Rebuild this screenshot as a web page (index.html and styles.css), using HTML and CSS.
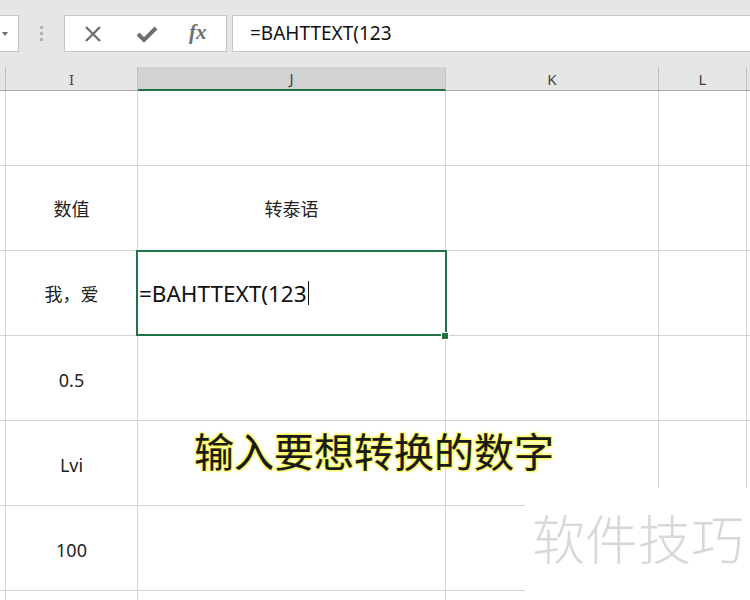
FILE: index.html
```html
<!DOCTYPE html>
<html lang="zh-CN">
<head>
<meta charset="utf-8">
<title>BAHTTEXT</title>
<link rel="stylesheet" href="styles.css">
</head>
<body>
<div class="app">
  <div class="toolbar">
    <div class="namebox"><span class="caret"></span></div>
    <div class="grip"><i></i><i></i><i></i></div>
    <div class="fxbox">
      <svg class="ico" width="20" height="20" viewBox="0 0 20 20"><path d="M3 3 L17 17 M17 3 L3 17" stroke="#6f6f6f" stroke-width="2.4" fill="none"/></svg>
      <svg class="ico" width="22" height="20" viewBox="0 0 22 20"><path d="M2 10 L8 16 L20 4" stroke="#6f6f6f" stroke-width="4" fill="none" stroke-linejoin="miter"/></svg>
      <span class="fx">fx</span>
    </div>
    <div class="formula">=BAHTTEXT(123</div>
  </div>

  <div class="sheet">
    <div class="hd stub"></div>
    <div class="hd">I</div>
    <div class="hd sel">J</div>
    <div class="hd">K</div>
    <div class="hd">L</div>
    <div class="hd end"></div>

    <div class="c stub r1"></div><div class="c r1"></div><div class="c r1"></div><div class="c r1"></div><div class="c r1"></div><div class="c end r1"></div>

    <div class="c stub"></div><div class="c">数值</div><div class="c">转泰语</div><div class="c"></div><div class="c"></div><div class="c end"></div>

    <div class="c stub"></div><div class="c">我，爱</div><div class="c active"><span class="edit">=BAHTTEXT(123</span><span class="cursor"></span><span class="handle"></span></div><div class="c"></div><div class="c"></div><div class="c end"></div>

    <div class="c stub"></div><div class="c num">0.5</div><div class="c"></div><div class="c"></div><div class="c"></div><div class="c end"></div>

    <div class="c stub"></div><div class="c num">Lvi</div><div class="c"></div><div class="c"></div><div class="c"></div><div class="c end"></div>

    <div class="c stub"></div><div class="c num">100</div><div class="c"></div><div class="c"></div><div class="c"></div><div class="c end"></div>

    <div class="c stub"></div><div class="c"></div><div class="c"></div><div class="c"></div><div class="c"></div><div class="c end"></div>
  </div>

  <div class="caption">输入要想转换的数字</div>
  <div class="watermark">软件技巧</div>
</div>
</body>
</html>
```

FILE: styles.css
```css
* { box-sizing: border-box; }
html, body { margin: 0; padding: 0; }
body {
  width: 750px;
  height: 600px;
  overflow: hidden;
  background: #ffffff;
  font-family: "Noto Sans", "Noto Sans CJK SC", sans-serif;
  color: #222222;
}
.app {
  position: relative;
  width: 750px;
  height: 600px;
  overflow: hidden;
}

/* ---------- toolbar ---------- */
.toolbar {
  height: 67px;
  background: #e6e6e6;
  display: flex;
  align-items: flex-start;
  padding-top: 15px;
}
.namebox {
  width: 19px;
  height: 37px;
  background: #ffffff;
  border: 1px solid #c6c6c6;
  border-left: none;
  display: flex;
  align-items: center;
}
.caret {
  margin-left: 2px;
  width: 0;
  height: 0;
  border-left: 3px solid transparent;
  border-right: 3px solid transparent;
  border-top: 4px solid #6f6f6f;
}
.grip {
  width: 45px;
  height: 37px;
  display: flex;
  flex-direction: column;
  align-items: center;
  justify-content: center;
  gap: 3px;
}
.grip i {
  display: block;
  width: 3px;
  height: 3px;
  background: #b4b4b4;
}
.fxbox {
  width: 163px;
  height: 37px;
  background: #ffffff;
  border: 1px solid #c6c6c6;
  display: flex;
  align-items: center;
  padding-left: 18px;
}
.fxbox .ico { display: block; }
.fxbox .ico:first-child { margin-right: 33px; }
.fxbox .ico:nth-child(2) { margin-right: 31px; }
.fx {
  font-family: "Liberation Serif", "DejaVu Serif", serif;
  font-style: italic;
  font-weight: bold;
  font-size: 21px;
  color: #707070;
  line-height: 1;
  margin-top: -3px;
}
.formula {
  margin-left: 5px;
  flex: 1;
  height: 37px;
  background: #ffffff;
  border: 1px solid #c6c6c6;
  border-right: none;
  padding-left: 17px;
  font-size: 19px;
  line-height: 35px;
  color: #111111;
}

/* ---------- sheet ---------- */
.sheet {
  display: grid;
  grid-template-columns: 6px 132px 308px 213px 88px 4px;
  grid-template-rows: 24px 75px repeat(6, 85px);
}
.hd {
  background: #e6e6e6;
  border-right: 1px solid #c0c0c0;
  border-bottom: 1px solid #a8a8a8;
  font-size: 15px;
  color: #444444;
  display: flex;
  align-items: center;
  justify-content: center;
  line-height: 1;
  padding-top: 1px;
}
.hd.sel {
  background: #d2d2d2;
  border-bottom: 2px solid #217346;
}
.hd.end { border-right: none; }
.c {
  border-right: 1px solid #d4d4d4;
  border-bottom: 1px solid #d4d4d4;
  display: flex;
  align-items: center;
  justify-content: center;
  font-size: 18px;
  color: #222222;
}
.c.num { padding-top: 3px; }
.c.end { border-right: none; }

.c.active {
  position: relative;
  justify-content: flex-start;
  padding-left: 1px;
}
.c.active::before {
  content: "";
  position: absolute;
  left: -2px;
  top: -1px;
  right: -2px;
  bottom: -1px;
  border: 2px solid #217346;
  pointer-events: none;
}
.edit {
  font-size: 22.5px;
  color: #111111;
}
.cursor {
  display: inline-block;
  width: 1px;
  height: 24px;
  background: #111111;
  margin-left: 1px;
}
.handle {
  position: absolute;
  right: -3px;
  bottom: -4px;
  width: 6px;
  height: 6px;
  background: #217346;
  outline: 1px solid #ffffff;
}

/* ---------- overlays ---------- */
.caption {
  position: absolute;
  left: 194px;
  top: 424px;
  font-family: "Noto Sans CJK SC", sans-serif;
  font-size: 40px;
  font-weight: 400;
  line-height: 52px;
  color: #1a1a1a;
  white-space: nowrap;
  -webkit-text-stroke: 0.2px #1a1a1a;
  text-shadow:
    0 0 2px #ffff55,
    1px 1px 2px #ffff55,
    -1px -1px 2px #ffff55,
    1px -1px 2px #ffff55,
    -1px 1px 2px #ffff55;
}
.watermark {
  position: absolute;
  left: 525px;
  top: 488px;
  width: 225px;
  height: 112px;
  background: #ffffff;
  padding-left: 7px;
  padding-top: 14px;
  font-family: "Noto Sans CJK SC", sans-serif;
  font-size: 53px;
  font-weight: 300;
  line-height: 70px;
  color: #d8d8d8;
  white-space: nowrap;
}
```
